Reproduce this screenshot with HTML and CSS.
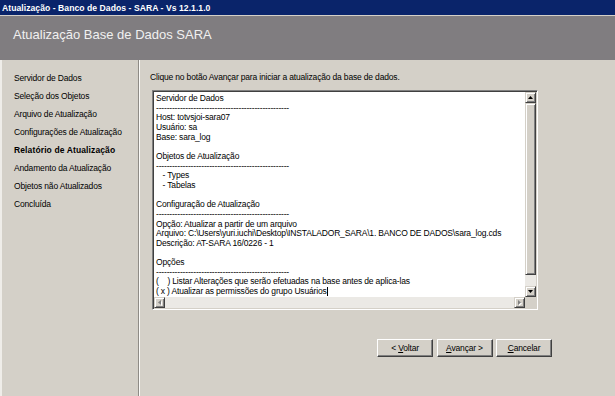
FILE: index.html
```html
<!DOCTYPE html>
<html lang="pt-BR">
<head>
<meta charset="utf-8">
<title>Atualização - Banco de Dados - SARA</title>
<link rel="stylesheet" href="styles.css">
</head>
<body>
<div class="window">
  <div class="titlebar">Atualização - Banco de Dados - SARA - Vs 12.1.1.0</div>
  <div class="header"><h1 class="header-title">Atualização Base de Dados SARA</h1></div>
  <div class="content">
    <ul class="steps">
      <li>Servidor de Dados</li>
      <li>Seleção dos Objetos</li>
      <li>Arquivo de Atualização</li>
      <li>Configurações de Atualização</li>
      <li class="current">Relatório de Atualização</li>
      <li>Andamento da Atualização</li>
      <li>Objetos não Atualizados</li>
      <li>Concluída</li>
    </ul>
    <div class="main">
      <p class="intro">Clique no botão Avançar para iniciar a atualização da base de dados.</p>
      <div class="report">
        <div class="report-text">Servidor de Dados
--------------------------------------------------
Host: totvsjoi-sara07
Usuário: sa
Base: sara_log

Objetos de Atualização
--------------------------------------------------
   - Types
   - Tabelas

Configuração de Atualização
--------------------------------------------------
Opção: Atualizar a partir de um arquivo
Arquivo: C:\Users\yuri.iuchi\Desktop\INSTALADOR_SARA\1. BANCO DE DADOS\sara_log.cds
Descrição: AT-SARA 16/0226 - 1

Opções
--------------------------------------------------
(    ) Listar Alterações que serão efetuadas na base antes de aplica-las
( x ) Atualizar as permissões do grupo Usuários<span class="caret"></span></div>
        <div class="vscroll">
          <div class="sb-btn"><svg width="5" height="3" viewBox="0 0 5 3"><path d="M2.5 0L5 3H0z" fill="#000"/></svg></div>
          <div class="sb-thumb"></div>
          <div class="sb-track"></div>
          <div class="sb-btn"><svg width="5" height="3" viewBox="0 0 5 3"><path d="M0 0H5L2.5 3z" fill="#000"/></svg></div>
        </div>
        <div class="hscroll">
          <div class="sb-btn"><svg width="4" height="6" viewBox="0 0 4 6"><path d="M1 3.5L4 1V6z" fill="#fff"/><path d="M0 2.5L3 0V5z" fill="#808080"/></svg></div>
          <div class="sb-track"></div>
          <div class="sb-btn"><svg width="4" height="6" viewBox="0 0 4 6"><path d="M1 1L4 3.5L1 6z" fill="#fff"/><path d="M0 0L3 2.5L0 5z" fill="#808080"/></svg></div>
        </div>
        <div class="corner"></div>
      </div>
      <div class="actions">
        <button class="btn" type="button">&lt; <span class="key">V</span>oltar</button>
        <button class="btn" type="button"><span class="key">A</span>vançar &gt;</button>
        <button class="btn" type="button"><span class="key">C</span>ancelar</button>
      </div>
    </div>
  </div>
</div>
</body>
</html>
```
FILE: styles.css
```css
html, body {
  margin: 0;
  padding: 0;
  background: #d4d0c8;
}

body {
  font-family: "Liberation Sans", Arial, sans-serif;
  font-size: 8.5px;
  letter-spacing: -0.17px;
  color: #000;
}

.window {
  width: 615px;
  height: 396px;
  display: flex;
  flex-direction: column;
  overflow: hidden;
}

.titlebar {
  flex: none;
  height: 15px;
  background: #0a246a;
  color: #fff;
  font-weight: bold;
  font-size: 8.6px;
  letter-spacing: 0.05px;
  line-height: 16px;
  padding-left: 2px;
  white-space: nowrap;
}

.header {
  flex: none;
  height: 45px;
  box-sizing: border-box;
  border-top: 1px solid #d4d0c8;
  background: #807d80;
  padding: 11px 0 0 13px;
}

.header-title {
  margin: 0;
  font-weight: normal;
  font-size: 13px;
  line-height: 15px;
  letter-spacing: 0;
  color: #f0f0f0;
}

.content {
  flex: 1;
  display: flex;
  border-left: 2px solid #efede9;
}

.steps {
  flex: none;
  list-style: none;
  margin: 0;
  padding: 9px 0 0 12px;
  width: 137px;
  box-sizing: border-box;
  border-right: 1px solid #8e8b86;
}

.steps li {
  line-height: 18px;
  white-space: nowrap;
}

.steps .current {
  font-weight: bold;
  letter-spacing: 0.12px;
}

.main {
  flex: 1;
  border-left: 1px solid #fbfaf8;
  padding: 12px 0 0 10px;
  display: flex;
  flex-direction: column;
}

.intro {
  margin: 0 0 8px;
  line-height: 10px;
  white-space: nowrap;
}

.report {
  width: 386px;
  height: 220px;
  margin-left: 2px;
  box-sizing: border-box;
  border: 1px solid;
  border-color: #808080 #fff #fff #808080;
  box-shadow: inset 1px 1px #404040, inset -1px -1px #d4d0c8;
  padding: 1px;
  background: #fff;
  display: grid;
  grid-template-columns: 1fr 11px;
  grid-template-rows: 1fr 11px;
}

.report-text {
  white-space: pre;
  overflow: hidden;
  padding: 2px 0 0 2px;
  line-height: 9.65px;
}

.caret {
  display: inline-block;
  width: 0;
  height: 9px;
  border-left: 1px solid #000;
  vertical-align: -2px;
}

.vscroll {
  display: flex;
  flex-direction: column;
}

.hscroll {
  display: flex;
}

.sb-btn,
.sb-thumb {
  flex: none;
  box-sizing: border-box;
  background: #d4d0c8;
  border: 1px solid;
  border-color: #d4d0c8 #404040 #404040 #d4d0c8;
  box-shadow: inset 1px 1px #fff, inset -1px -1px #808080;
}

.sb-btn {
  width: 11px;
  height: 11px;
  display: flex;
  align-items: center;
  justify-content: center;
}

.sb-btn svg {
  display: block;
}

.sb-thumb {
  height: 172px;
}

.sb-track {
  flex: 1;
  background: #ebe9e5;
}

.corner {
  background: #d4d0c8;
}

.actions {
  display: flex;
  justify-content: flex-end;
  gap: 3.5px;
  margin-top: 29px;
  padding-right: 63px;
}

.btn {
  width: 56px;
  height: 18px;
  box-sizing: border-box;
  padding: 0;
  font: inherit;
  letter-spacing: inherit;
  color: #000;
  background: #d4d0c8;
  border: 1px solid;
  border-color: #fff #404040 #404040 #fff;
  box-shadow: inset -1px -1px #808080;
}

.key {
  text-decoration: underline;
}
```
